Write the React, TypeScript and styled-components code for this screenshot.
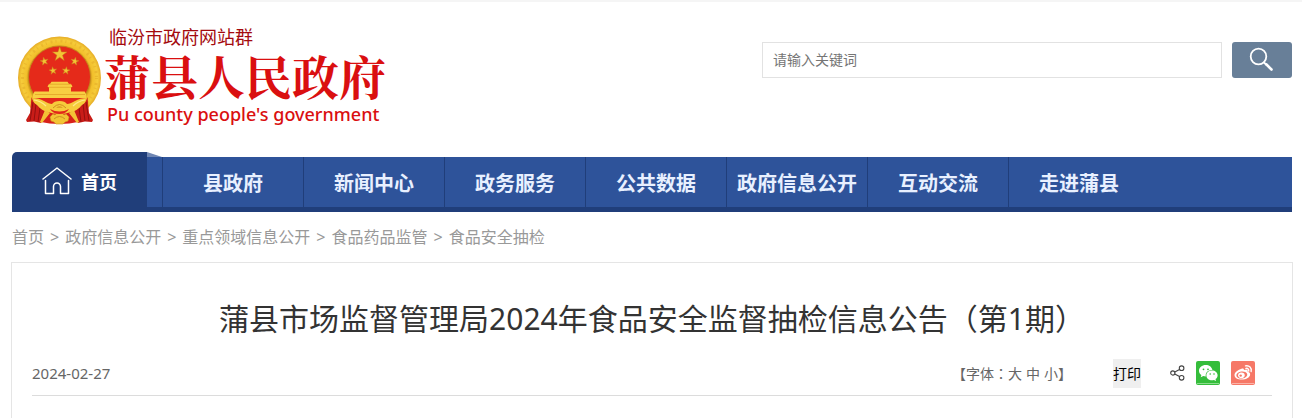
import React from "react";
import styled, { createGlobalStyle } from "styled-components";

const GlobalStyle = createGlobalStyle`
  *, *::before, *::after { box-sizing: border-box; }
  body {
    margin: 0;
    background: #fff;
    color: #333;
    font-family: "Noto Sans", "Noto Sans CJK SC", sans-serif;
    font-size: 14px;
  }
  a { color: inherit; text-decoration: none; }
  button, input { font-family: inherit; }
`;

const Page = styled.div`
  border-top: 2px solid #f5f5f5;
  padding: 0 10px 0 12px;
`;

const Header = styled.header`
  display: flex;
  justify-content: space-between;
  align-items: flex-start;
  height: 150px;
`;

const Brand = styled.a`
  display: flex;
  align-items: flex-start;
  gap: 2px;
  padding: 24px 0 0 4px;
`;

const EmblemSvg = styled.svg`
  width: 86px;
  height: 90px;
  margin-top: 10px;
`;

const BrandText = styled.span`
  display: flex;
  flex-direction: column;
  color: #da0f10;
  white-space: nowrap;
`;

const BrandGroup = styled.span`
  padding-left: 5px;
  font-family: "Liberation Sans", "Noto Sans CJK SC", sans-serif;
  font-size: 18px;
  line-height: 24px;
  color: #a40a0e;
`;

const BrandName = styled.span`
  padding-top: 6px;
  font-family: "Liberation Serif", "Noto Serif CJK SC", "Noto Sans CJK SC", serif;
  font-size: 47px;
  line-height: 46px;
  font-weight: 700;
`;

const BrandEnglish = styled.span`
  padding-left: 3px;
  font-size: 18px;
  line-height: 24px;
  font-weight: 500;
`;

const SearchForm = styled.form`
  display: flex;
  gap: 10px;
  padding-top: 40px;
`;

const SearchInput = styled.input`
  width: 460px;
  height: 36px;
  padding: 0 10px 2px;
  border: 1px solid #e2e2e2;
  border-radius: 0;
  font-size: 14px;
  color: #333;
  &::placeholder { color: #757575; opacity: 1; }
`;

const SearchButton = styled.button`
  display: flex;
  align-items: center;
  justify-content: center;
  width: 60px;
  height: 36px;
  padding: 0;
  border: 0;
  border-radius: 3px;
  background: #687f98;
  cursor: pointer;
`;

const Nav = styled.nav`
  display: flex;
  align-items: flex-end;
`;

const HomeLink = styled.a`
  display: flex;
  align-items: center;
  justify-content: center;
  gap: 9px;
  width: 135px;
  height: 60px;
  padding-bottom: 2px;
  border-radius: 5px 0 0 0;
  background: #203e7a;
  color: #fff;
  font-size: 18px;
  font-weight: 700;
`;

const NavBody = styled.div`
  display: flex;
  flex-direction: column;
  flex: 1;
`;

const Fold = styled.svg`
  display: block;
  width: 15px;
  height: 5px;
`;

const NavList = styled.ul`
  display: flex;
  margin: 0;
  padding: 0 0 0 15px;
  list-style: none;
  background: #2e539a;
  border-bottom: 5px solid #203e7a;
`;

const NavItem = styled.li`
  width: 141px;
  border-left: 1px solid #203e7a;
`;

const NavLink = styled.a`
  display: block;
  padding-top: 4px;
  line-height: 46px;
  text-align: center;
  font-size: 20px;
  font-weight: 700;
  color: #e8f0ff;
  white-space: nowrap;
`;

const Crumbs = styled.nav`
  display: flex;
  gap: 6px;
  height: 50px;
  line-height: 50px;
  font-size: 16px;
  color: #999;
`;

const Article = styled.article`
  margin: 0 -1px;
  padding: 0 20px 24px;
  border: 1px solid #e5e5e5;
  border-bottom: 0;
`;

const Title = styled.h1`
  margin: 0;
  padding: 34px 0 20px;
  font-size: 30px;
  line-height: 44px;
  font-weight: 400;
  text-align: center;
  color: #333;
`;

const Meta = styled.div`
  display: flex;
  align-items: center;
  justify-content: space-between;
  height: 35px;
  padding-bottom: 10px;
  border-bottom: 1px solid #dcdcdc;
  color: #666;
`;

const PublishDate = styled.time`
  font-size: 15px;
`;

const Tools = styled.div`
  display: flex;
  align-items: center;
  padding-right: 17px;
`;

const FontSizes = styled.div`
  display: flex;
  gap: 4px;
  margin-right: 41px;
  font-family: "Noto Sans", "Noto Sans CJK TC", sans-serif;
`;

const FontSizeButton = styled.button`
  padding: 0;
  border: 0;
  background: none;
  color: inherit;
  font-size: 14px;
  cursor: pointer;
`;

const PrintButton = styled.button`
  height: 29px;
  margin-right: 29px;
  padding: 0;
  border: 0;
  background: #efefef;
  color: #000;
  font-size: 14px;
  cursor: pointer;
`;

const ShareGroup = styled.div`
  display: flex;
  align-items: center;
  gap: 11px;
`;

const ShareLink = styled.a`
  display: flex;
`;

const menu = ["县政府", "新闻中心", "政务服务", "公共数据", "政府信息公开", "互动交流", "走进蒲县"];
const trail = ["首页", "政府信息公开", "重点领域信息公开", "食品药品监管", "食品安全抽检"];

function starPoints(cx: number, cy: number, r: number, turn = 0) {
  return Array.from({ length: 10 }, (_, i) => {
    const radius = i % 2 ? r * 0.39 : r;
    const angle = ((i * 36 - 90 + turn) * Math.PI) / 180;
    return `${(cx + radius * Math.cos(angle)).toFixed(2)},${(cy + radius * Math.sin(angle)).toFixed(2)}`;
  }).join(" ");
}

function Emblem() {
  return (
    <EmblemSvg viewBox="0 0 86 90" aria-hidden="true">
      <defs>
        <radialGradient id="gold" cx="50%" cy="50%" r="50%">
          <stop offset="0.74" stopColor="#c98f18" />
          <stop offset="0.8" stopColor="#f2c02c" />
          <stop offset="0.92" stopColor="#f6cc3a" />
          <stop offset="1" stopColor="#e5ab26" />
        </radialGradient>
      </defs>
      <ellipse cx="43.500" cy="42" rx="41.500" ry="41.500" fill="url(#gold)" />
      <circle cx="43.500" cy="42" r="37" fill="none" stroke="#e0a526" strokeWidth="3" strokeDasharray="1 4 2 3" opacity="0.45" />
      <circle cx="43.500" cy="41" r="31" fill="#e52a1a" stroke="#c08a1c" strokeWidth="0.8" />
      <g fill="#f3c435" stroke="#c9801a" strokeWidth="0.5">
        <polygon points={starPoints(43.7, 18.3, 7.6)} />
        <polygon points={starPoints(28.3, 25.3, 4.2, -12)} />
        <polygon points={starPoints(58.8, 25.3, 4.2, 12)} />
        <polygon points={starPoints(37, 34.7, 4, -8)} />
        <polygon points={starPoints(50, 34.7, 4, 8)} />
      </g>
      <path d="M35.500 45.700h16l1.500 2.300h2l1.500 2.500-1.500 1v4h13.700l1.500 3V63H17v-4.500l1.500-3H33v-4l-1.500-1L33 48h1z" fill="#f8cf42" />
      <path d="M33 48.200h22M33 51.300h22M19 58.500h50" stroke="#e2a327" strokeWidth="0.800" fill="none" />
      <path d="M17 62h53l-8 9H25z" fill="#e3281a" />
      {/* drapes on both sides of the ribbon */}
      <path d="M15.500 61.500L24 66l6 9-5 12-7-1.500-7 .5-1-2 4-7z" fill="#c91c18" />
      <path d="M71.500 61.500L63 66l-6 9 5 12 7-1.500 7 .5 1-2-4-7z" fill="#c91c18" />
      <path d="M17 66l-3 19M20 68l-2 17M24 72l-2 14M70 66l3 19M67 68l2 17M63 72l2 14" stroke="#93100f" strokeWidth="1" fill="none" />
      {/* lower red swag and crossing ribbon ends */}
      <path d="M29 72h29l4 14q-8 2-18.500 2T25 86z" fill="#d8211a" />
      <path d="M29 74l5 3-8 10-2-1zM58 74l-5 3 8 10 2-1z" fill="#f3c235" />
      <path d="M34 81l3-3 2 1 2-2h5l2 2 2-1 3 3-1 4-3 1-2 2h-7l-2-2-3-1z" fill="#f3c435" stroke="#cf8f1e" strokeWidth="0.600" />
      <path d="M38 83q5.500-5 11 0" stroke="#cf8f1e" strokeWidth="1" fill="none" />
      <path d="M16 62q7 0 12 3 5 3 8 3 2-3 7.500-3t7.500 3q3 0 8-3 5-3 12-3-1 5-5 7-5 6-11 7-5 2-11.500 2T32 76q-6-1-11-7-4-2-5-7z" fill="#f6cb3c" />
      <path d="M34 73q9.500 5 19 0-3 5-9.500 5T34 73z" fill="#e3281a" />
      <path d="M18 64q7 1 12 6M69 64q-7 1-12 6" stroke="#fde98a" strokeWidth="1.200" fill="none" />
      <path d="M37 72q6.500-7 13 0" stroke="#cf8f1e" strokeWidth="1" fill="none" />
      <path d="M40 72q3.500-4 7 0z" fill="#e0a528" />
    </EmblemSvg>
  );
}

function SearchIcon() {
  return (
    <svg width="26" height="26" viewBox="0 0 26 26" fill="none" stroke="#fff" strokeLinecap="round" aria-hidden="true">
      <circle cx="9.500" cy="9.500" r="7.800" strokeWidth="1.800" />
      <path d="M15 15.500l2 2" strokeWidth="1.800" />
      <path d="M17.500 17.500l5 5" strokeWidth="2.600" />
    </svg>
  );
}

function HomeIcon() {
  return (
    <svg width="30" height="28" viewBox="0 0 30 28" fill="none" stroke="#fff" strokeWidth="1.500" strokeLinejoin="round" strokeLinecap="round" aria-hidden="true">
      <path d="M1 12L15 1l14 11" />
      <path d="M3.500 13.500V26.500h8v-7a3.500 3.500 0 0 1 7 0v7h8v-13" />
    </svg>
  );
}

function ShareIcon() {
  return (
    <svg width="15" height="16" viewBox="0 0 15 16" fill="none" stroke="#444" strokeWidth="1.100" aria-hidden="true">
      <circle cx="2.800" cy="8" r="2.100" />
      <circle cx="11.600" cy="3.200" r="2.300" />
      <circle cx="11.600" cy="12.800" r="2.300" />
      <path d="M4.800 7l4.700-2.600M4.800 9l4.700 2.600" />
    </svg>
  );
}

function WechatIcon() {
  return (
    <svg width="24" height="24" viewBox="0 0 24 24" aria-hidden="true">
      <rect width="24" height="24" rx="2" fill="#35bd3b" />
      <path d="M1 22.500h22" stroke="#8bdc8d" />
      <path d="M9.800 4C5.900 4 3 6.500 3 9.700c0 1.800.9 3.300 2.400 4.400L4.700 16.300l2.600-1.300c.8.200 1.600.4 2.500.4a6 6 0 0 1-.1-1.200c0-3 2.700-5.300 6.200-5.300h.5C15.800 6 13.100 4 9.800 4z" fill="#fff" />
      <path d="M16 9.600c-3.200 0-5.600 2.100-5.600 4.800s2.400 4.800 5.600 4.800c.7 0 1.300-.1 1.900-.3l2.200 1.200-.6-2c1.300-.9 2.100-2.200 2.100-3.700 0-2.700-2.400-4.800-5.600-4.800z" fill="#fff" />
      <g fill="#35bd3b">
        <circle cx="7.500" cy="8.300" r="0.900" />
        <circle cx="12" cy="8.300" r="0.900" />
        <circle cx="14.200" cy="13" r="0.800" />
        <circle cx="18" cy="13" r="0.800" />
      </g>
    </svg>
  );
}

function WeiboIcon() {
  return (
    <svg width="24" height="24" viewBox="0 0 24 24" aria-hidden="true">
      <rect width="24" height="24" rx="2" fill="#f67867" />
      <path d="M1 22.500h22" stroke="#fbb4a9" />
      <path d="M10.500 7.700c1.400-.6 2.500-.3 2.500 1.300 2-.9 4.300-.8 3.700 1.800 2 .6 2.700 1.700 2.400 3.100-.6 2.600-4.300 4.700-8.400 4.700-4 0-7.200-1.900-7.200-4.700 0-2.700 3.700-5.100 7-6.200z" fill="#fff" />
      <ellipse cx="10.800" cy="14" rx="5.500" ry="3.500" fill="#f67867" transform="rotate(-8 10.800 14)" />
      <ellipse cx="10.400" cy="14.200" rx="3.300" ry="2.800" fill="#fff" />
      <circle cx="9.700" cy="14.600" r="1.200" fill="#f67867" />
      <path d="M14.500 4.900c3.700-.8 6.500 2 5.600 5.600M14.900 7.400c1.900-.4 3.200.9 2.800 2.700" fill="none" stroke="#fff" strokeWidth="1.400" strokeLinecap="round" />
    </svg>
  );
}

export default function App() {
  return (
    <>
      <GlobalStyle />
      <Page>
        <Header>
          <Brand href="#">
            <Emblem />
            <BrandText>
              <BrandGroup>临汾市政府网站群</BrandGroup>
              <BrandName>蒲县人民政府</BrandName>
              <BrandEnglish>Pu county people's government</BrandEnglish>
            </BrandText>
          </Brand>
          <SearchForm role="search" onSubmit={(e) => e.preventDefault()}>
            <SearchInput type="text" placeholder="请输入关键词" aria-label="请输入关键词" />
            <SearchButton type="submit" aria-label="搜索">
              <SearchIcon />
            </SearchButton>
          </SearchForm>
        </Header>

        <Nav>
          <HomeLink href="#">
            <HomeIcon />
            首页
          </HomeLink>
          <NavBody>
            <Fold viewBox="0 0 15 5" aria-hidden="true">
              <path d="M0 0l15 5H0z" fill="#6f86b3" />
            </Fold>
            <NavList>
              {menu.map((label) => (
                <NavItem key={label}>
                  <NavLink href="#">{label}</NavLink>
                </NavItem>
              ))}
            </NavList>
          </NavBody>
        </Nav>

        <Crumbs>
          {trail.map((label, i) => (
            <React.Fragment key={label}>
              {i > 0 && <span>&gt;</span>}
              <a href="#">{label}</a>
            </React.Fragment>
          ))}
        </Crumbs>

        <Article>
          <Title>蒲县市场监督管理局2024年食品安全监督抽检信息公告（第1期）</Title>
          <Meta>
            <PublishDate dateTime="2024-02-27">2024-02-27</PublishDate>
            <Tools>
              <FontSizes>
                <span>
                  【字体：<FontSizeButton type="button">大</FontSizeButton>
                </span>
                <FontSizeButton type="button">中</FontSizeButton>
                <span>
                  <FontSizeButton type="button">小</FontSizeButton>】
                </span>
              </FontSizes>
              <PrintButton type="button">打印</PrintButton>
              <ShareGroup>
                <ShareLink href="#" aria-label="分享">
                  <ShareIcon />
                </ShareLink>
                <ShareLink href="#" aria-label="微信">
                  <WechatIcon />
                </ShareLink>
                <ShareLink href="#" aria-label="微博">
                  <WeiboIcon />
                </ShareLink>
              </ShareGroup>
            </Tools>
          </Meta>
        </Article>
      </Page>
    </>
  );
}
